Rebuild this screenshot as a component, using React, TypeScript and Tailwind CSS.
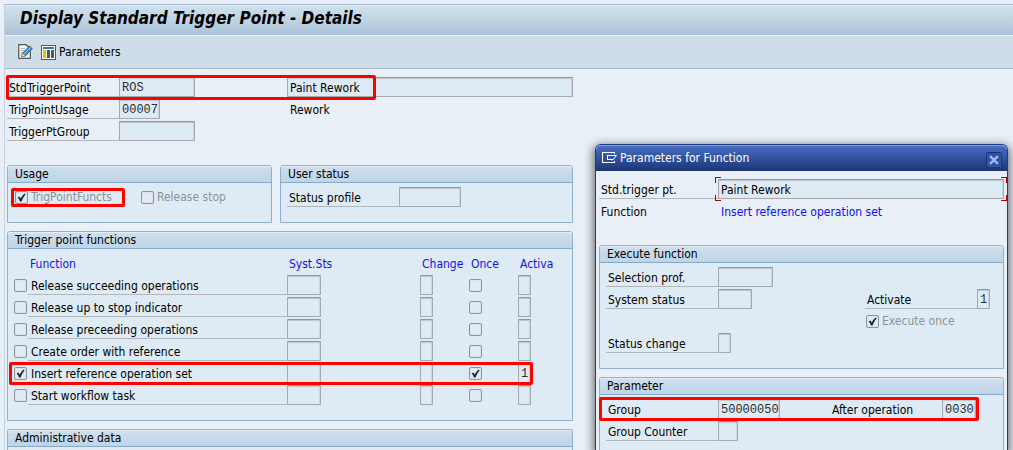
import { useId, type ReactNode } from "react";

function Field({ id, value = "", mono, className, label }: { id?: string; value?: string; mono?: boolean; className: string; label?: string }) {
  return (
    <input
      id={id}
      aria-label={label}
      readOnly
      value={value}
      className={`h-5 min-w-0 rounded-[1px] border border-[#a6a9ac] border-t-[#939699] bg-[#deebf4] pt-px pl-0.5 shadow-[inset_0_1px_1px_#bcc6cd,inset_-1px_0_1px_#ccd6dd] outline-none ${
        mono ? "font-['Liberation_Mono',monospace] text-[#2a2d31]" : "text-black"
      } ${className}`}
    />
  );
}

function Label({ htmlFor, children, className = "w-28" }: { htmlFor?: string; children: ReactNode; className?: string }) {
  return (
    <label htmlFor={htmlFor} className={`h-5 shrink-0 border-b border-[#b4b7ba] pl-0.5 leading-[22px] whitespace-nowrap ${className}`}>
      {children}
    </label>
  );
}

function Check({ id, checked, disabled, label }: { id?: string; checked?: boolean; disabled?: boolean; label?: string }) {
  return (
    <span className="grid size-[13px] shrink-0">
      <input
        id={id}
        type="checkbox"
        aria-label={label}
        defaultChecked={checked}
        disabled={disabled}
        className="peer col-start-1 row-start-1 size-[13px] appearance-none rounded-[2px] border border-[#8d949b] bg-[#e0ebf3] shadow-[inset_0_0_1px_#aab1b8]"
      />
      <svg viewBox="0 0 13 13" className="pointer-events-none invisible col-start-1 row-start-1 size-[13px] peer-checked:visible">
        <path d="M2.6 6.4 L4.4 5.6 L5.7 7.6 C6.8 5.4 8 3.8 9.8 2.6 L10.6 3.4 C8.8 5.4 7.6 7.6 6.6 10.6 L5 10.6 C4.4 8.8 3.7 7.5 2.6 6.4Z" fill="#20233c" />
      </svg>
    </span>
  );
}

function CheckRow({ checked, children }: { checked?: boolean; children: ReactNode }) {
  const id = useId();
  return (
    <div className="flex h-5 items-center gap-[3px] text-[#8d9297]">
      <Check id={id} checked={checked} disabled />
      <label htmlFor={id} className="leading-[22px] whitespace-nowrap">{children}</label>
    </div>
  );
}

function Panel({ title, children, className = "" }: { title: string; children?: ReactNode; className?: string }) {
  return (
    <section className={`rounded-t-[3px] border border-[#8fb0d0] bg-[#deebf4] ${className}`}>
      <h2 className="h-[17px] rounded-t-[2px] border-b border-[#87a9cb] bg-linear-to-b from-[#cfdfed] to-[#bed4e8] pl-[7px] leading-[17px] shadow-[inset_0_1px_0_#e4eef7]">
        {title}
      </h2>
      {children}
    </section>
  );
}

function Highlight({ className }: { className: string }) {
  return <div className={`pointer-events-none absolute rounded-[2px] border-3 border-[#fe0000] ${className}`} />;
}

const functions = [
  { name: "Release succeeding operations" },
  { name: "Release up to stop indicator" },
  { name: "Release preceeding operations" },
  { name: "Create order with reference" },
  { name: "Insert reference operation set", active: true },
  { name: "Start workflow task" },
];

function FunctionTable() {
  return (
    <table className="mt-1 ml-1.5 w-[544px] table-fixed border-collapse text-left">
      <colgroup>
        <col className="w-3.5" />
        <col />
        <col className="w-[133px]" />
        <col className="w-[49px]" />
        <col className="w-[49px]" />
        <col className="w-10" />
      </colgroup>
      <thead>
        <tr className="h-[22px] text-[#1010f0]">
          <td className="p-0" />
          {["Function", "Syst.Sts", "Change", "Once", "Activa"].map((h) => (
            <th key={h} className="p-0 pl-0.5 font-normal">{h}</th>
          ))}
        </tr>
      </thead>
      <tbody>
        {functions.map((f) => (
          <tr key={f.name} className="h-[22px] align-top">
            <td className="p-0 pt-1"><Check label={f.name} checked={f.active} /></td>
            <td className="relative p-0">
              <div className="h-5 border-b border-[#b4b7ba] pl-[3px] leading-[22px]">{f.name}</div>
              {f.active && <Highlight className="-top-[1px] -left-[19px] h-[23px] w-[524px]" />}
            </td>
            <td className="p-0"><Field label="System status" className="block w-[34px]" /></td>
            <td className="p-0"><Field label="Change" className="block w-[13px]" /></td>
            <td className="p-0 pt-1"><Check label="Once" checked={f.active} /></td>
            <td className="p-0"><Field label="Activate" mono value={f.active ? "1" : ""} className="block w-[13px]" /></td>
          </tr>
        ))}
      </tbody>
    </table>
  );
}

function Corners() {
  return (
    <div className="pointer-events-none absolute -top-0.5 -right-[3px] -bottom-0.5 -left-[3px] grid grid-cols-2 grid-rows-2">
      <i className="size-1.5 border-t border-l border-[#b00000]" />
      <i className="size-1.5 justify-self-end border-t border-r border-[#b00000]" />
      <i className="size-1.5 self-end border-b border-l border-[#b00000]" />
      <i className="size-1.5 self-end justify-self-end border-r border-b border-[#b00000]" />
    </div>
  );
}

function Dialog() {
  return (
    <div
      role="dialog"
      aria-label="Parameters for Function"
      className="absolute top-36 right-[5px] bottom-0 w-[413px] rounded-t-[6px] border border-b-0 border-[#1f3c7c] bg-[#e8eff6] shadow-[0_3px_10px_2px_#00000088]"
    >
      <header className="flex h-[26px] items-center rounded-t-[5px] bg-linear-to-b from-[#4a70c8] to-[#1c3675] pr-[5px] pl-1.5 text-white shadow-[inset_0_1px_0_#7d9ae0]">
        <svg viewBox="0 0 15 12" className="h-3 w-[15px]" fill="none" stroke="#fff" shapeRendering="crispEdges">
          <path d="M12.5 2 V.5 H.5 V10.5 H12.5 V9" />
          <path d="M12 3.5 H5.5 V7.5 H11" />
          <path d="M12 3.5 H14.5 L11 7.8 H9" shapeRendering="auto" />
        </svg>
        <h2 className="ml-[3px] flex-1">Parameters for Function</h2>
        <button aria-label="Close" className="mt-1 grid size-4 place-items-center rounded-[2px] border border-[#1b3270] bg-[#2f509d] shadow-[inset_0_0_1px_#7d9ae0]">
          <svg viewBox="0 0 10 10" className="size-2.5" stroke="#9dbdf8" strokeWidth="2.4">
            <path d="M1 1.2 L9 8.8 M9 1.2 L1 8.8" />
          </svg>
        </button>
      </header>

      <div className="px-[3px] pt-2">
        <div className="flex">
          <Label htmlFor="std-trigger" className="w-[119px]">Std.trigger pt.</Label>
          <div className="relative flex flex-1">
            <Field id="std-trigger" value="Paint Rework" className="flex-1" />
            <Corners />
          </div>
        </div>
        <div className="mt-0.5 flex h-5 pl-0.5 leading-[22px]">
          <span className="w-[120px]">Function</span>
          <span className="text-[#1010f0]">Insert reference operation set</span>
        </div>

        <Panel title="Execute function" className="mt-6 h-[124px]">
          <div className="flex flex-col gap-0.5 pt-1 pr-[13px] pl-1.5">
            <div className="flex">
              <Label htmlFor="selection">Selection prof.</Label>
              <Field id="selection" className="w-[55px]" />
            </div>
            <div className="flex">
              <Label htmlFor="sys-status">System status</Label>
              <Field id="sys-status" className="w-[34px]" />
              <Label htmlFor="activate" className="ml-auto w-28">Activate</Label>
              <Field id="activate" mono value="1" className="w-[13px]" />
            </div>
            <div className="flex justify-end">
              <div className="w-[124px]"><CheckRow checked>Execute once</CheckRow></div>
            </div>
            <div className="flex">
              <Label htmlFor="status-change">Status change</Label>
              <Field id="status-change" className="w-[13px]" />
            </div>
          </div>
        </Panel>

        <Panel title="Parameter" className="mt-2 h-[73px] border-b-0">
          <div className="relative flex flex-col gap-0.5 pt-1 pr-[27px] pl-1.5">
            <div className="flex">
              <Label htmlFor="group">Group</Label>
              <Field id="group" mono value="50000050" className="w-[62px]" />
              <Label htmlFor="after-op" className="ml-auto w-28">After operation</Label>
              <Field id="after-op" mono value="0030" className="w-[34px]" />
            </div>
            <div className="flex">
              <Label htmlFor="group-counter">Group Counter</Label>
              <Field id="group-counter" className="w-5" />
            </div>
            <Highlight className="top-0.5 right-6 -left-[1px] h-6" />
          </div>
        </Panel>
      </div>
    </div>
  );
}

function Toolbar() {
  return (
    <div className="flex h-[33px] items-center border-b border-[#a2b5cd] bg-[#cfdde8] pl-[13px]">
      <button aria-label="Edit" className="size-4">
        <svg viewBox="0 0 16 16" className="size-4">
          <path d="M.7 .7 H8 L12.3 4.5 V14.3 H.7Z" fill="#f4f4f2" stroke="#55585b" strokeWidth="1.2" />
          <path d="M2.5 4.5H7M2.5 6.5H8M2.5 8.5H6M2.5 10.5H5" stroke="#bfc0bd" />
          <path d="M3.6 12.8 L4.6 9.2 L11.6 2 L14.4 4.6 L7.4 12Z" fill="#3f8cbc" stroke="#235d85" strokeWidth=".8" />
          <path d="M5.6 10.6 L12.8 3.4" stroke="#9fd0ec" strokeWidth=".9" />
          <path d="M3.6 12.8 L4.6 9.2 L7.4 12Z" fill="#eee6cf" stroke="#666" strokeWidth=".4" />
        </svg>
      </button>
      <button className="ml-[7px] flex items-center gap-[3px]">
        <svg viewBox="0 0 15 15" className="size-[15px]" shapeRendering="crispEdges">
          <path d="M.5 .5H14.5V14.5H.5Z" fill="#fff" stroke="#55585b" />
          <path d="M2 2H13V4H2Z" fill="#2f7fb3" />
          <path d="M2 5H5V13H2Z" fill="#f6b90a" />
          <path d="M6 5H9V13H6ZM10 5H13V13H10Z" fill="#55585b" />
        </svg>
        Parameters
      </button>
    </div>
  );
}

export default function App() {
  return (
    <main className="relative min-h-screen overflow-hidden bg-[#e8eff6] pt-1 pl-1 font-['DejaVu_Sans_Condensed','DejaVu_Sans',sans-serif] text-xs text-black">
      <div className="border-t border-l border-[#a2b5cd] border-l-[#c6d2df]">
        <h1 className="flex h-[31px] items-center border-y border-[#eaf3fa] bg-linear-to-b from-[#cfe0ec] via-[#bfd3e1] to-[#aac2dc] pb-1 pl-[15px] text-[17px] font-bold italic">
          Display Standard Trigger Point - Details
        </h1>
        <Toolbar />
        <div className="w-full max-w-[568px] pt-2 pl-0.5">
          <div className="relative flex flex-col gap-0.5">
            <div className="flex">
              <Label htmlFor="trigger-point">StdTriggerPoint</Label>
              <Field id="trigger-point" mono value="ROS" className="w-[76px]" />
              <Field label="Description" value="Paint Rework" className="ml-[92px] flex-1" />
            </div>
            <div className="flex">
              <Label htmlFor="usage">TrigPointUsage</Label>
              <Field id="usage" mono value="00007" className="w-[41px]" />
              <span className="ml-[130px] h-5 leading-[22px]">Rework</span>
            </div>
            <div className="flex">
              <Label htmlFor="pt-group">TriggerPtGroup</Label>
              <Field id="pt-group" className="w-[76px]" />
            </div>
            <Highlight className="-top-0.5 -left-px h-[25px] w-[370px]" />
          </div>

          <div className="mt-6 flex gap-2">
            <Panel title="Usage" className="h-[58px] w-[265px]">
              <div className="relative flex gap-6 pt-1 pl-[7px]">
                <div className="w-[102px]"><CheckRow checked>TrigPointFuncts</CheckRow></div>
                <CheckRow>Release stop</CheckRow>
                <Highlight className="top-[5px] left-[3px] h-[19px] w-[114px]" />
              </div>
            </Panel>
            <Panel title="User status" className="h-[58px] flex-1">
              <div className="flex pt-1 pl-1.5">
                <Label htmlFor="status-profile">Status profile</Label>
                <Field id="status-profile" className="w-[62px]" />
              </div>
            </Panel>
          </div>

          <Panel title="Trigger point functions" className="mt-2 pb-[13px]">
            <FunctionTable />
          </Panel>
          <Panel title="Administrative data" className="mt-2 h-[21px] border-b-0" />
        </div>
      </div>
      <Dialog />
    </main>
  );
}
